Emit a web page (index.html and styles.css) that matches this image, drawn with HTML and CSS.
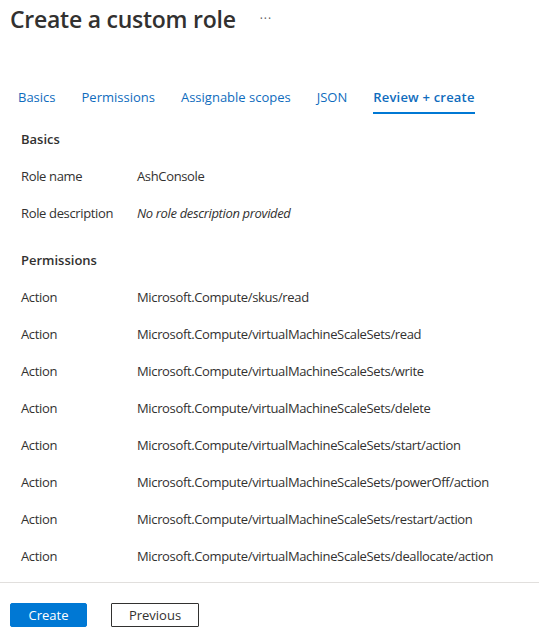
FILE: index.html
```html
<!DOCTYPE html>
<html>
<head>
<meta charset="utf-8">
<link rel="stylesheet" href="styles.css">
</head>
<body>
<div class="page">
  <header class="titlebar">
    <h1 class="title">Create a custom role</h1>
    <span class="more">···</span>
  </header>
  <nav class="tabs">
    <span class="tab">Basics</span>
    <span class="tab">Permissions</span>
    <span class="tab">Assignable scopes</span>
    <span class="tab">JSON</span>
    <span class="tab active">Review + create</span>
  </nav>
  <main class="content">
    <h2 class="section">Basics</h2>
    <div class="row"><span class="label">Role name</span><span class="value">AshConsole</span></div>
    <div class="row"><span class="label">Role description</span><span class="value empty">No role description provided</span></div>
    <h2 class="section perms">Permissions</h2>
    <div class="row"><span class="label">Action</span><span class="value">Microsoft.Compute/skus/read</span></div>
    <div class="row"><span class="label">Action</span><span class="value">Microsoft.Compute/virtualMachineScaleSets/read</span></div>
    <div class="row"><span class="label">Action</span><span class="value">Microsoft.Compute/virtualMachineScaleSets/write</span></div>
    <div class="row"><span class="label">Action</span><span class="value">Microsoft.Compute/virtualMachineScaleSets/delete</span></div>
    <div class="row"><span class="label">Action</span><span class="value">Microsoft.Compute/virtualMachineScaleSets/start/action</span></div>
    <div class="row"><span class="label">Action</span><span class="value">Microsoft.Compute/virtualMachineScaleSets/powerOff/action</span></div>
    <div class="row"><span class="label">Action</span><span class="value">Microsoft.Compute/virtualMachineScaleSets/restart/action</span></div>
    <div class="row"><span class="label">Action</span><span class="value">Microsoft.Compute/virtualMachineScaleSets/deallocate/action</span></div>
  </main>
  <footer class="footer">
    <button class="btn primary">Create</button>
    <button class="btn secondary">Previous</button>
  </footer>
</div>
</body>
</html>
```
FILE: styles.css
```css
* { box-sizing: border-box; }
html, body { margin: 0; padding: 0; background: #fff; }
body {
  font-family: "Open Sans", "Noto Sans", sans-serif;
  color: #323130;
  font-size: 13px;
  overflow: hidden;
}
.page { width: 539px; height: 635px; }
.titlebar {
  display: flex;
  align-items: center;
  padding: 1px 0 0 10px;
  height: 36px;
}
.title {
  margin: 0;
  font-size: 23px;
  font-weight: 600;
  color: #323130;
  letter-spacing: -0.25px;
}
.more {
  margin-left: 24px;
  font-size: 12px;
  color: #605e5c;
  letter-spacing: 1px;
}
.tabs {
  display: flex;
  gap: 26px;
  padding: 52px 0 0 18px;
  font-size: 13px;
  color: #0f6cbd;
}
.tab { padding-bottom: 6px; border-bottom: 2px solid transparent; }
.tab.active { font-weight: 600; border-bottom-color: #0078d4; letter-spacing: 0.2px; }
.content { padding: 13px 0 0 21px; }
.section {
  margin: 0;
  font-size: 13px;
  font-weight: 600;
  height: 24px;
  line-height: 24px;
  color: #323130;
}
.section.perms { margin-top: 23px; }
.row {
  display: flex;
  height: 37px;
  line-height: 24px;
  padding-top: 13px;
  letter-spacing: -0.35px;
}
.label { width: 116px; flex: none; }
.empty { font-style: italic; }
.footer {
  margin-top: 14px;
  border-top: 1px solid #e1dfdd;
  display: flex;
  gap: 24px;
  padding: 20px 0 0 10px;
}
.btn {
  font-family: inherit;
  font-size: 13px;
  height: 24px;
  padding: 0;
  border-radius: 2px;
  cursor: pointer;
}
.btn.primary {
  width: 77px;
  background: #0078d4;
  border: 1px solid #0078d4;
  color: #fff;
}
.btn.secondary {
  width: 88px;
  background: #fff;
  border: 1px solid #323130;
  color: #323130;
  border-radius: 1px;
}
```
